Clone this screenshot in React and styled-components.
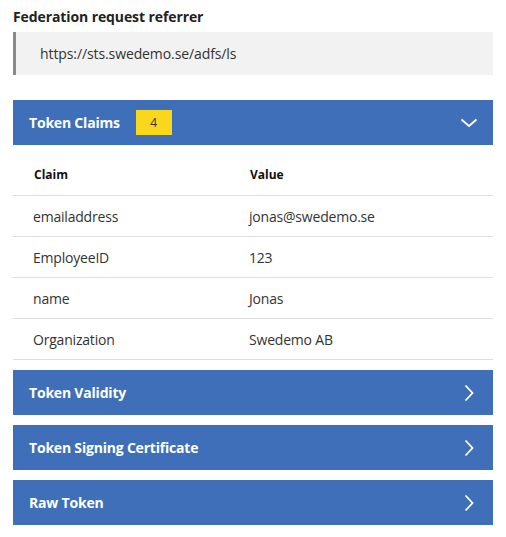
import React from 'react';
import styled, { createGlobalStyle } from 'styled-components';

const GlobalStyle = createGlobalStyle`
    body {
        margin: 0;
        background: #ffffff;
        font-family: "Open Sans", "Noto Sans", sans-serif;
        color: #333333;
    }
`;

const claims = [
    { claim: 'emailaddress', value: 'jonas@swedemo.se' },
    { claim: 'EmployeeID', value: '123' },
    { claim: 'name', value: 'Jonas' },
    { claim: 'Organization', value: 'Swedemo AB' },
];

const Chevron = ({ down }) => (
    <svg width="18" height="18" viewBox="0 0 18 18" fill="none">
        {down
            ? <path d="M1.5 5.5 L9 12 L16.5 5.5" stroke="#ffffff" strokeWidth="1.8" />
            : <path d="M5.5 1.5 L12.5 9 L5.5 16.5" stroke="#ffffff" strokeWidth="1.8" />}
    </svg>
);

export default function App() {
    return (
        <>
            <GlobalStyle />
            <Page>
                <Label>Federation request referrer</Label>
                <Field>
                    <FieldText>https://sts.swedemo.se/adfs/ls</FieldText>
                </Field>

                <Section>
                    <Header>
                        <HeaderTitle>Token Claims</HeaderTitle>
                        <Badge>4</Badge>
                        <Spacer />
                        <Chevron down />
                    </Header>
                    <Table>
                        <thead>
                            <tr>
                                <Th>Claim</Th>
                                <Th>Value</Th>
                            </tr>
                        </thead>
                        <tbody>
                            {claims.map((c) => (
                                <tr key={c.claim}>
                                    <Td>{c.claim}</Td>
                                    <Td>{c.value}</Td>
                                </tr>
                            ))}
                        </tbody>
                    </Table>
                </Section>

                {['Token Validity', 'Token Signing Certificate', 'Raw Token'].map((t) => (
                    <Header key={t}>
                        <HeaderTitle>{t}</HeaderTitle>
                        <Spacer />
                        <Chevron />
                    </Header>
                ))}
            </Page>
        </>
    );
}

const Page = styled.div`
    width: 480px;
    padding: 7px 13px 12px;
    display: flex;
    flex-direction: column;
    gap: 10px;
`;

const Label = styled.div`
    font-size: 14px;
    font-weight: 700;
    color: #222222;
    margin-bottom: -4px;
    letter-spacing: -0.1px;
`;

const Field = styled.div`
    height: 43px;
    background: #f2f2f2;
    border-left: 3px solid #8a8a8a;
    display: flex;
    align-items: center;
    padding-left: 24px;
    margin-bottom: 15px;
`;

const FieldText = styled.div`
    white-space: nowrap;
    font-size: 14px;
    color: #333333;
    letter-spacing: -0.1px;
`;

const Section = styled.div`
    display: flex;
    flex-direction: column;
`;

const Header = styled.div`
    height: 45px;
    background: #3e6fb8;
    display: flex;
    align-items: center;
    padding: 0 15px 0 16px;
    color: #ffffff;
`;

const HeaderTitle = styled.div`
    font-size: 14px;
    font-weight: 700;
    letter-spacing: -0.2px;
`;

const Badge = styled.div`
    margin-left: 16px;
    width: 36px;
    height: 25px;
    background: #f9d71c;
    color: #333333;
    font-size: 12px;
    display: flex;
    align-items: center;
    justify-content: center;
`;

const Spacer = styled.div`
    flex: 1;
`;

const Table = styled.table`
    width: 100%;
    border-collapse: collapse;
    table-layout: fixed;
`;

const Th = styled.th`
    text-align: left;
    font-size: 12px;
    font-weight: 700;
    color: #111111;
    height: 42px;
    padding: 8px 0 0 21px;
    border-bottom: 1px solid #dddddd;

    &:first-child {
        width: 195px;
    }
`;

const Td = styled.td`
    font-size: 14px;
    color: #333333;
    height: 40px;
    padding: 0 0 0 20px;
    border-bottom: 1px solid #dddddd;
    letter-spacing: -0.2px;
`;
